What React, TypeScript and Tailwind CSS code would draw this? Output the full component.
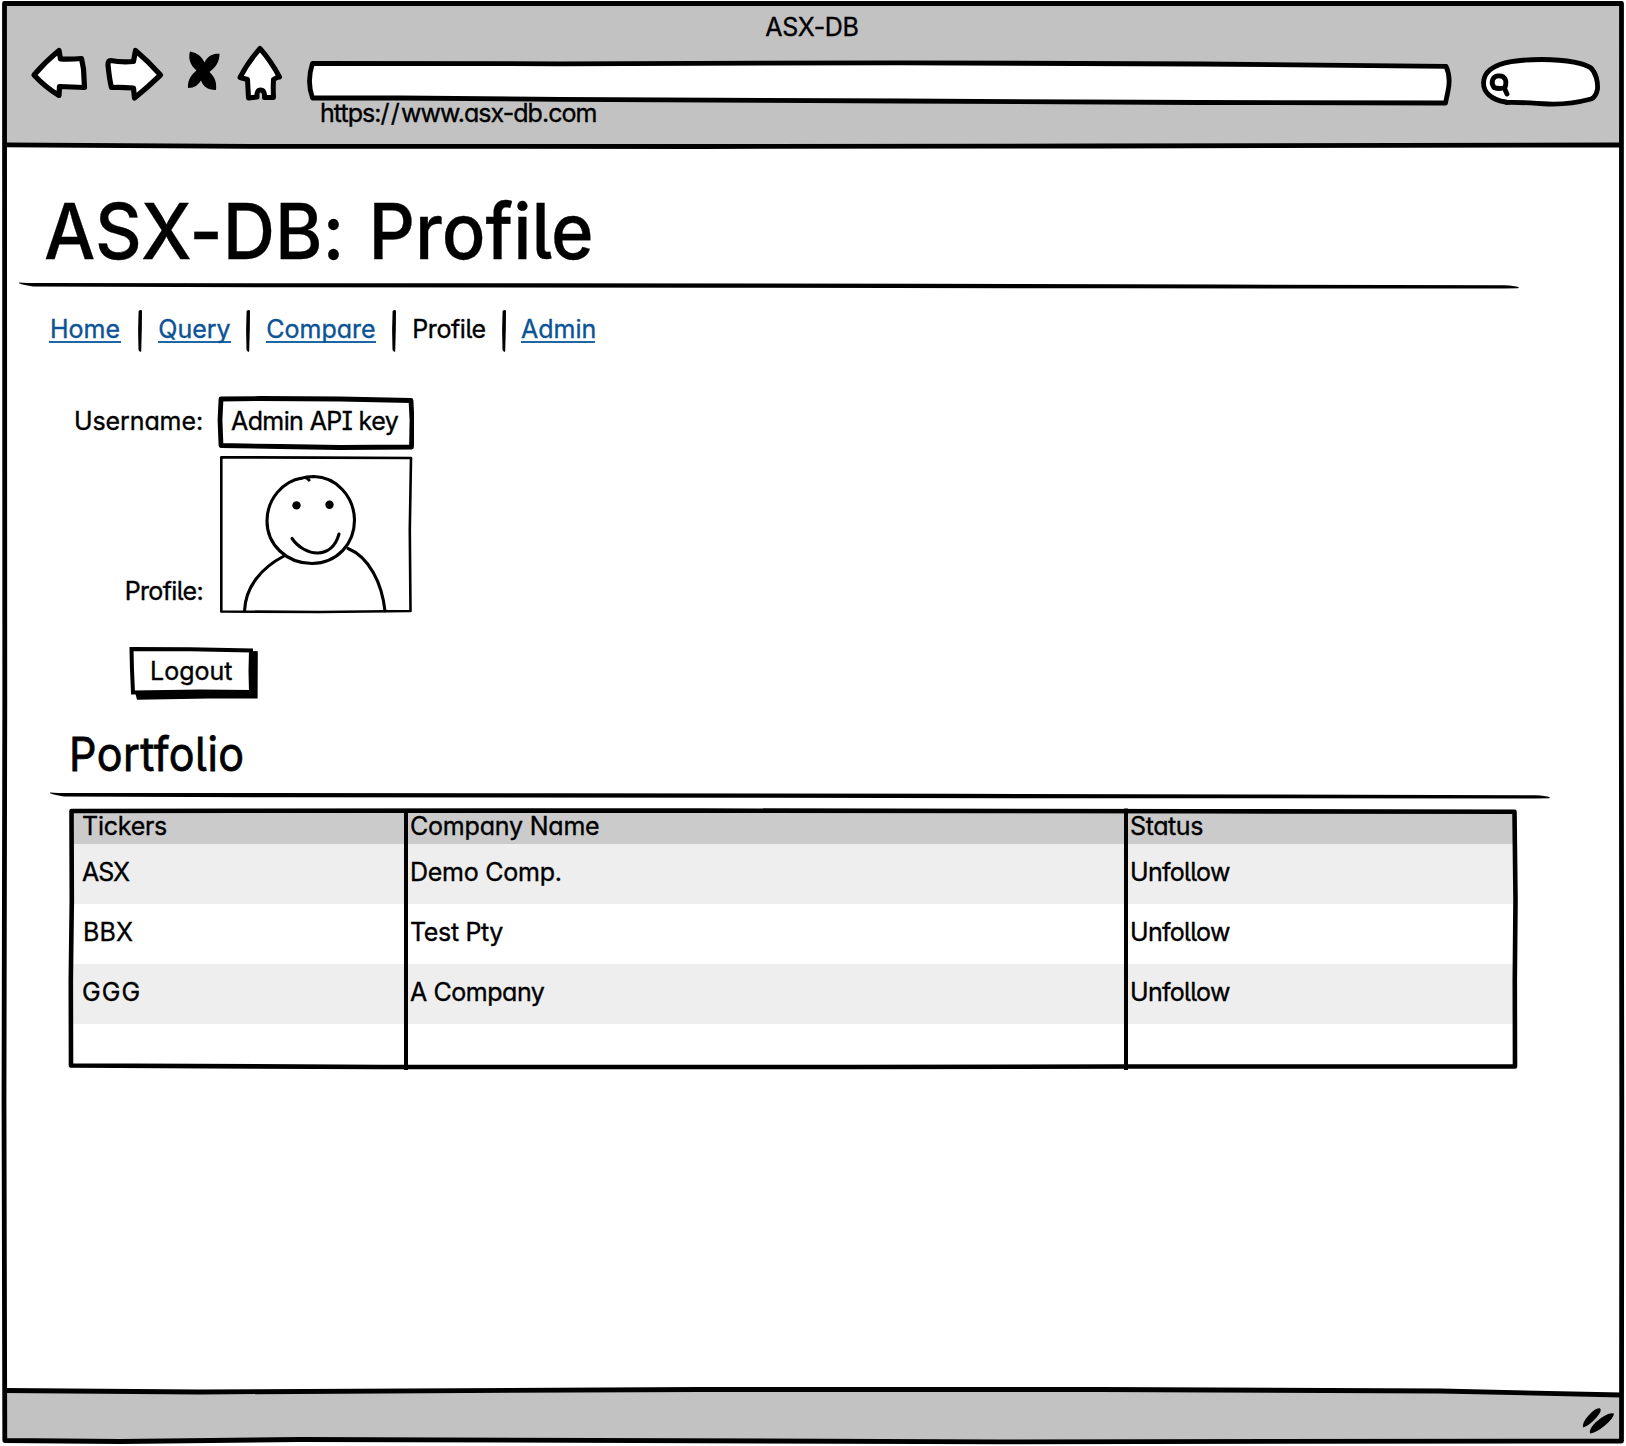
import type { ReactNode } from "react";

const rows = [
  { ticker: "ASX", tickerClass: "tracking-[-1px]", company: "Demo Comp.", companyClass: "tracking-[-0.25px]", shade: "bg-[#eeeeee]" },
  { ticker: "BBX", tickerClass: "pl-px tracking-[0.2px]", company: "Test Pty", companyClass: "tracking-[-0.35px]", shade: "bg-white" },
  { ticker: "GGG", tickerClass: "tracking-[1.1px]", company: "A Company", companyClass: "tracking-[-0.45px]", shade: "bg-[#eeeeee]" },
];

/* Body label with a fixed 30px line. */
function Label({ children, className = "" }: { children: ReactNode; className?: string }) {
  return <span className={`block h-[30px] whitespace-nowrap text-[25px] leading-[30px] ${className}`}>{children}</span>;
}

function Toolbar() {
  return (
    <div className="-mt-px flex h-[66px] pl-7">
      <svg className="h-[66px] w-[62px] shrink-0" viewBox="28 41 62 66" fill="#fff" stroke="#000" strokeWidth="5.2" strokeLinejoin="round">
        <path d="M34 75 Q45 62 59 50.5 L60.5 59 Q70 59.5 81.5 58.5 L83.5 69 L84.5 87.5 L59.5 86.5 L59 95.5 Q45 87 34 75Z" />
      </svg>
      <svg className="ml-3 h-[66px] w-16 shrink-0" viewBox="102 41 64 66" fill="#fff" stroke="#000" strokeWidth="5.2" strokeLinejoin="round">
        <path d="M110.5 60.5 Q121 62.5 133.5 61.5 L135.5 50.5 Q149 62 160.5 75 Q148 87 134.5 98 L133.5 88 Q121 87 111.5 87.5 Q109.5 80 108 65 Q108 60.5 110.5 60.5Z" />
      </svg>
      <svg className="ml-4 h-[66px] w-[42px] shrink-0" viewBox="182 41 42 66">
        <path d="M190 51.5 C198 53 202 57 204.500 62.500 C208 56 212 53.500 219.500 53.800 C219.500 62 216 67 209.500 72 C215 77 217 83 216 90 C207 90 203 86 201 80.500 C198 85 195 88 188 88 C187.500 80 191 75 196.500 70.500 C190 65 188 58 190 51.500Z" />
      </svg>
      <svg className="ml-2.5 h-[66px] w-[52px] shrink-0" viewBox="234 41 52 66" fill="#fff" stroke="#000" strokeWidth="5" strokeLinejoin="round">
        <path d="M260 48.500 Q271 61 279.500 77 Q277 77 273.500 79.500 Q273 88 273.500 97.500 L264.500 97.500 Q265 90 260.500 90 Q256.500 90 257 97 L248.500 98 L247.500 79.500 L240 77.500 Q248 62 260 48.500Z" />
      </svg>
      <svg className="ml-5 h-[66px] w-[1146px] shrink-0" viewBox="306 41 1146 66" fill="#fff" stroke="#000" strokeWidth="4.800" strokeLinejoin="round">
        <path d="M312.500 63.300 L560 63.800 L900 62.800 L1200 64 L1446 66.300 Q1451 77 1448 91 L1445.500 103 L1200 102.500 L900 101 L560 99.300 L400 98 L312.500 98 Q306.500 82 312.500 63.300Z" />
      </svg>
      <svg className="ml-[26px] h-[66px] w-[124px] shrink-0" viewBox="1478 41 124 66" fill="#fff" stroke="#000" strokeWidth="4.800" strokeLinejoin="round" strokeLinecap="round">
        <path d="M1506 102 C1491 100 1483.500 92 1483.500 83 C1484 65 1507 59.500 1542 59.500 C1568 59.500 1585 63.500 1591 68 C1596 73 1598 82 1597.500 89 Q1596 97 1591 99 C1576 103 1562 104.500 1548 104 C1530 103 1520 102 1506 102.500" />
        <path d="M1494 87.500 C1490 82 1493 75.700 1499 75.900 C1506 76 1507 82 1505 87.500 Q1499 89.500 1494 87.500 M1504.500 88.500 L1507 94" fill="none" />
      </svg>
    </div>
  );
}

function Separator({ className = "" }: { className?: string }) {
  return (
    <svg className={`h-[42px] w-1 shrink-0 ${className}`} viewBox="0 0 4 42">
      <path d="M0.600 1 Q2.500 -0.500 4 0.500 L3.800 20 L3.200 41.500 Q1.800 42.500 0.500 40 L0.100 20Z" />
    </svg>
  );
}

function NavLink({ children, className }: { children: string; className: string }) {
  return (
    <a href="#" className={`block h-[30px] shrink-0 whitespace-nowrap border-b-2 border-[#1f66a5] text-center text-[25px] leading-[32px] text-[#0b5394] ${className}`}>
      {children}
    </a>
  );
}

function Rule({ className }: { className: string }) {
  return (
    <svg className={`block h-2.5 w-[1500px] ${className}`} viewBox="0 0 1500 10" preserveAspectRatio="none">
      <path d="M0 1.500 Q8 2 16 2 L500 2.300 L900 2.800 L1200 3.500 L1486 4.300 Q1495 4.800 1500 6.300 L1499 7.300 Q1492 7.300 1486 7.500 L1100 7.300 L700 6.800 L240 6.300 L14 5.500 Q5 4 0 2.200Z" />
    </svg>
  );
}

function Avatar() {
  return (
    <svg className="h-[161px] w-[198px]" viewBox="216 454 198 161" fill="none" stroke="#000" strokeWidth="3.100" strokeLinecap="round" strokeLinejoin="round">
      <path d="M221.300 457.300 L320 457.600 L411 458 L409.800 530 L410.500 611 L320 612 L221.300 611.500Z" strokeWidth="2.600" />
      <path d="M309 480 Q307 476.500 302 478 C283 481 267 499 267 521 C267 545 287 563.500 312 563.500 C337 563 354.500 544 354.500 520 C354 496 336 477 314 476.500 Q306 476.500 301 478.500" />
      <path d="M292 538.500 C305 557 332 560 339 534" />
      <path d="M284 556 C261 568 245.500 587 244.500 611 M348 548.500 C369 557 382 583 385 611" />
      <circle cx="296.500" cy="505.400" r="4.200" fill="#000" stroke="none" />
      <circle cx="329.500" cy="504.700" r="4.200" fill="#000" stroke="none" />
    </svg>
  );
}

export default function App() {
  return (
    <div className="relative flex h-[1446px] w-[1626px] flex-col overflow-hidden bg-white font-['Inter',sans-serif] text-black [-webkit-text-stroke:0.35px] [font-feature-settings:'cv11','ss02','calt'_0]">
      <header className="ml-1 mr-1 mt-[3px] h-[143px] bg-[#c2c2c2]">
        <div className="-ml-1 pt-[9px]">
          <Label className="pl-[2px] text-center tracking-[-0.3px]">ASX-DB</Label>
          <Toolbar />
          <Label className="-mt-[9px] ml-[320px] tracking-[-0.95px]">
            https:<span className="tracking-[1.2px]">//</span>www.asx-db.com
          </Label>
        </div>
      </header>

      <main className="flex-1">
        <h1 className="ml-[44px] mt-[36px] h-[99px] w-fit origin-left scale-x-[0.941] whitespace-nowrap text-[77px] font-medium leading-[99px] [-webkit-text-stroke:0.3px] [word-spacing:5px]">
          ASX-DB: Profile
        </h1>
        <Rule className="ml-[19px]" />

        <nav className="ml-[49px] mt-[19px] flex h-[42px]">
          <NavLink className="mt-[3px] w-[72px]">Home</NavLink>
          <Separator className="ml-[17px]" />
          <NavLink className="ml-4 mt-[3px] w-[73px]">Query</NavLink>
          <Separator className="ml-[15px]" />
          <NavLink className="ml-4 mt-[3px] w-[110px]">Compare</NavLink>
          <Separator className="ml-4" />
          <Label className="ml-4 mt-1 w-[74px] text-center tracking-[-0.4px]">Profile</Label>
          <Separator className="ml-4" />
          <NavLink className="ml-[15px] mt-[3px] w-[74px]">Admin</NavLink>
        </nav>

        <section className="mt-[43px]">
          <div className="grid w-[414px] grid-cols-[204px_198px] gap-x-3 gap-y-1">
            <Label className="mt-[11px] pr-px text-right tracking-[-0.1px]">Username:</Label>
            <div className="relative h-[55px]">
              <svg className="absolute inset-0 h-[55px] w-[198px]" viewBox="216 395 198 55" fill="none" stroke="#000" strokeLinejoin="round">
                <path d="M221 399 L260 398.500 L340 399 L411 400.500 L412 420 L411.500 447 L340 447.500 L280 446.500 L221 445.500 L220 420Z" strokeWidth="4.800" />
              </svg>
              <Label className="relative ml-[15px] pt-[11px] tracking-[-0.6px]">Admin API key</Label>
            </div>
            <Label className="mb-[9px] self-end pr-px text-right tracking-[-0.65px]">Profile:</Label>
            <Avatar />
          </div>

          <button type="button" className="relative ml-32 mt-[30px] flex h-14 w-[132px] items-start pt-[11px]">
            <svg className="absolute inset-0 h-14 w-[132px]" viewBox="128 645 132 56">
              <path d="M134 655 L252 651 L257.800 651.300 L257.600 698.500 L210 698.500 L137 699.700 L135.500 694Z" />
              <path d="M131.500 649 L190 649.300 L251 650.500 L250.500 671 L251 692 L200 691.500 L133 692.500 L132 670Z" fill="#fff" stroke="#000" strokeWidth="4" />
            </svg>
            <Label className="relative ml-[22px]">Logout</Label>
          </button>
        </section>

        <section>
          <h2 className="ml-[69px] mt-[23px] h-[60px] w-fit origin-left scale-x-[0.915] whitespace-nowrap text-[47px] leading-[60px] tracking-[0.5px] [-webkit-text-stroke:0.8px]">Portfolio</h2>
          <Rule className="ml-[50px] mt-[7px]" />

          <div className="relative ml-[71px] mt-[10px] h-[255px] w-[1444px]">
            <div className="grid h-[33px] grid-cols-[335px_720px_389px] bg-[#cbcbcb]">
              <Label className="pl-[11px] tracking-[-0.25px]">Tickers</Label>
              <Label className="pl-1 tracking-[-0.2px]">Company Name</Label>
              <Label className="pl-1 tracking-[-0.4px]">Status</Label>
            </div>
            {rows.map((row) => (
              <div key={row.ticker} className={`grid h-[60px] grid-cols-[335px_720px_389px] pt-[13px] ${row.shade}`}>
                <div className="pl-[11px]">
                  <Label className={row.tickerClass}>{row.ticker}</Label>
                </div>
                <Label className={`pl-1 ${row.companyClass}`}>{row.company}</Label>
                <Label className="pl-1 tracking-[-0.7px]">Unfollow</Label>
              </div>
            ))}
            <svg className="absolute -left-[5px] -top-[5px] h-[266px] w-[1454px]" viewBox="66 806 1454 266" fill="none" stroke="#000" strokeLinejoin="round">
              <path d="M71.500 811 L240 810.700 L700 810.600 L1200 811.200 L1514.500 811.800 L1515.500 900 L1514.800 980 L1515 1066.500 L1126 1066.500 L850 1067 L380 1067 L71 1065.500 L70.800 980 L71.800 900Z" strokeWidth="4.600" />
              <path d="M406 809 V1070 M1126 808.500 V1070" strokeWidth="4" />
            </svg>
          </div>
        </section>
      </main>

      <footer className="ml-1 mr-1 h-[57px] shrink-0">
        <svg className="block h-[57px] w-[1618px]" viewBox="4 1389 1618 57">
          <path d="M4 1391 L200 1392 L700 1389.500 L1440 1391 L1622 1395 V1441 H4Z" fill="#c2c2c2" />
          <path d="M1583 1427.500 Q1582 1422.500 1588.500 1415.500 Q1595.500 1407.500 1600 1408.300 Q1602.500 1410.500 1596.500 1417.500 Q1589 1426 1583 1427.500Z M1590 1433.500 Q1588.500 1429 1596 1422 Q1607.500 1412 1614 1413.500 Q1613.500 1418 1605.500 1425 Q1596 1433 1590 1433.500Z" />
        </svg>
      </footer>

      <svg className="pointer-events-none absolute inset-0 h-[1446px] w-[1626px]" viewBox="0 0 1626 1446" fill="none" stroke="#000" strokeWidth="4.800" strokeLinejoin="round">
        <path d="M4.500 3.500 L1621.500 3.500 L1621.300 700 L1621.800 1100 L1621.500 1441 L1000 1441.800 L300 1439.500 L120 1441.500 L4.800 1440.500 L4 1100 L4.800 700Z" />
        <path d="M4 144.800 L250 146.300 L700 146.500 L1100 146 L1621 145" />
        <path d="M4 1390.500 L200 1392 L700 1389.500 L1100 1389.500 L1440 1391 L1621 1395" />
      </svg>
    </div>
  );
}
